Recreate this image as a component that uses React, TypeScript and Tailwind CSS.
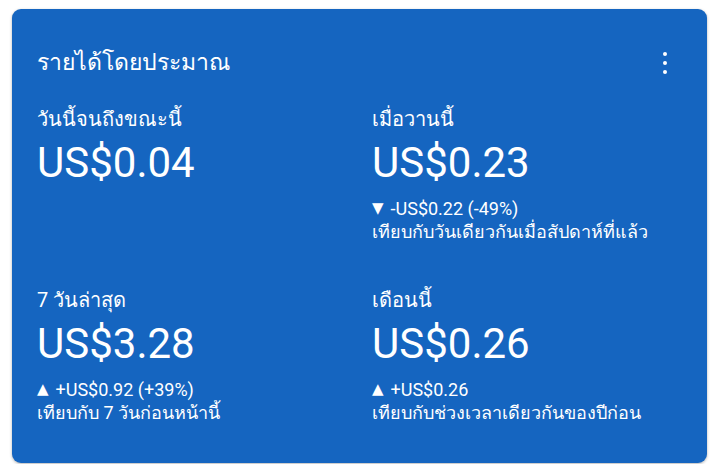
const stats = [
  { label: "วันนี้จนถึงขณะนี้", value: "US$0.04" },
  {
    label: "เมื่อวานนี้",
    value: "US$0.23",
    arrow: "▼",
    change: "-US$0.22 (-49%)",
    note: "เทียบกับวันเดียวกันเมื่อสัปดาห์ที่แล้ว",
  },
  {
    label: "7 วันล่าสุด",
    value: "US$3.28",
    arrow: "▲",
    change: "+US$0.92 (+39%)",
    note: "เทียบกับ 7 วันก่อนหน้านี้",
  },
  {
    label: "เดือนนี้",
    value: "US$0.26",
    arrow: "▲",
    change: "+US$0.26",
    note: "เทียบกับช่วงเวลาเดียวกันของปีก่อน",
  },
];

export default function App() {
  return (
    <div className="h-[464px] w-[720px] bg-white pt-[9px] font-['Roboto','Noto_Sans',sans-serif] text-white">
      <div className="mx-[12px] h-[454px] w-[695px] rounded-[9px] bg-[#1565c0] pl-[25px] pr-[40px] pt-[39px] shadow-[0_1px_3px_rgba(0,0,0,0.3)]">
        {/* header */}
        <div className="flex items-start justify-between">
          <h2 className="text-[23px] leading-[30px] font-normal">รายได้โดยประมาณ</h2>
          <div className="mt-[4px] flex flex-col items-center gap-[5px]">
            <span className="h-[4px] w-[4px] rounded-full bg-white" />
            <span className="h-[4px] w-[4px] rounded-full bg-white" />
            <span className="h-[4px] w-[4px] rounded-full bg-white" />
          </div>
        </div>

        {/* stats */}
        <div className="mt-[29px] grid grid-cols-[335px_1fr] gap-y-[45px]">
          {stats.map((s) => (
            <div key={s.label}>
              <div className="text-[20px] leading-[24px]">{s.label}</div>
              <div className="mt-[6px] text-[42px] leading-[52px]">{s.value}</div>
              {s.change && (
                <div className="mt-[8px] text-[18px] leading-[23px]">
                  <div className="flex items-center gap-[7px]">
                    <span className="text-[15px] leading-none font-['DejaVu_Sans',sans-serif]">{s.arrow}</span>
                    <span>{s.change}</span>
                  </div>
                  <div>{s.note}</div>
                </div>
              )}
            </div>
          ))}
        </div>
      </div>
    </div>
  );
}
